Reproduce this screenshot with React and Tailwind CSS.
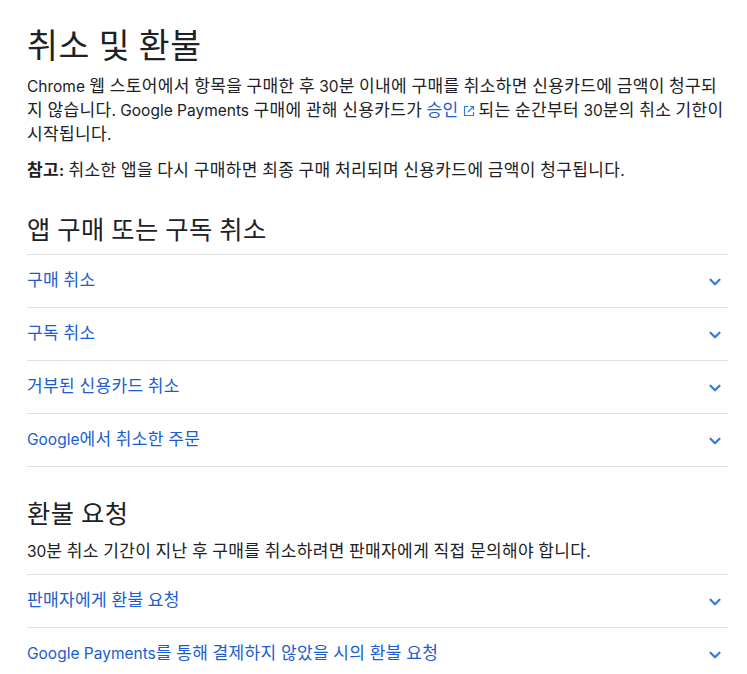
import React from 'react';
import { ChevronDown } from 'lucide-react';

const fontStack = "font-['Inter','Noto_Sans_CJK_KR',sans-serif]";

// hangul runs sit a bit larger than the latin text, like the source font
const Ko = ({ children }) => (
    <>
        {String(children).split(/([\u3131-\uD7A3]+)/).map((part, i) =>
            /[\u3131-\uD7A3]/.test(part) ? (
                <span key={i} className="text-[1.1em] leading-none tracking-[0.02em]">{part}</span>
            ) : (
                <span key={i}>{part}</span>
            )
        )}
    </>
);

const Row = ({ label }) => (
    <div className="flex h-[53px] items-center justify-between border-t border-[#e0e0e0] pr-1">
        <a className="text-[15.5px] leading-6 text-[#1a5dd0]"><Ko>{label}</Ko></a>
        <ChevronDown className="w-[18px] h-[18px] text-[#3b78e7] mt-0.5" strokeWidth={3} />
    </div>
);

const App = () => {
    return (
        <div className={`${fontStack} h-[674px] overflow-hidden bg-white text-[#202124] pl-[27px] pr-[19px] pt-[25px]`}>
            <h1 className="text-[30.5px] leading-[44px] mb-[6px]"><Ko>취소 및 환불</Ko></h1>
            <p className="text-[15.5px] leading-6">
                <Ko>Chrome 웹 스토어에서 항목을 구매한 후 30분 이내에 구매를 취소하면 신용카드에 금액이 청구되지 않습니다. Google Payments 구매에 관해 신용카드가 </Ko>
                <a className="text-[#1a5dd0]">
                    <Ko>승인</Ko>
                    <svg viewBox="0 0 12 12" className="inline w-3 h-3 mx-1 align-[-1px]" fill="none" stroke="#3b78e7" strokeWidth="1.2">
                        <path d="M5 1.5H1.5v9h9V7" />
                        <path d="M7 1.5h3.5V5M10.5 1.5 5 7" />
                    </svg>
                </a>
                <Ko>되는 순간부터 30분의 취소 기한이 시작됩니다.</Ko>
            </p>
            <p className="text-[15.5px] leading-6 mt-3">
                <b><Ko>참고:</Ko></b> <Ko>취소한 앱을 다시 구매하면 최종 구매 처리되며 신용카드에 금액이 청구됩니다.</Ko>
            </p>

            <h2 className="text-[23px] leading-8 mt-[32px] mb-[7px]"><Ko>앱 구매 또는 구독 취소</Ko></h2>
            <div className="border-b border-[#e0e0e0]">
                <Row label="구매 취소" />
                <Row label="구독 취소" />
                <Row label="거부된 신용카드 취소" />
                <Row label="Google에서 취소한 주문" />
            </div>

            <h2 className="text-[23px] leading-8 mt-[32px] mb-[9px]"><Ko>환불 요청</Ko></h2>
            <p className="text-[15.5px] leading-6 mb-[10px]"><Ko>30분 취소 기간이 지난 후 구매를 취소하려면 판매자에게 직접 문의해야 합니다.</Ko></p>
            <div>
                <Row label="판매자에게 환불 요청" />
                <Row label="Google Payments를 통해 결제하지 않았을 시의 환불 요청" />
            </div>
        </div>
    );
};

export default App;
